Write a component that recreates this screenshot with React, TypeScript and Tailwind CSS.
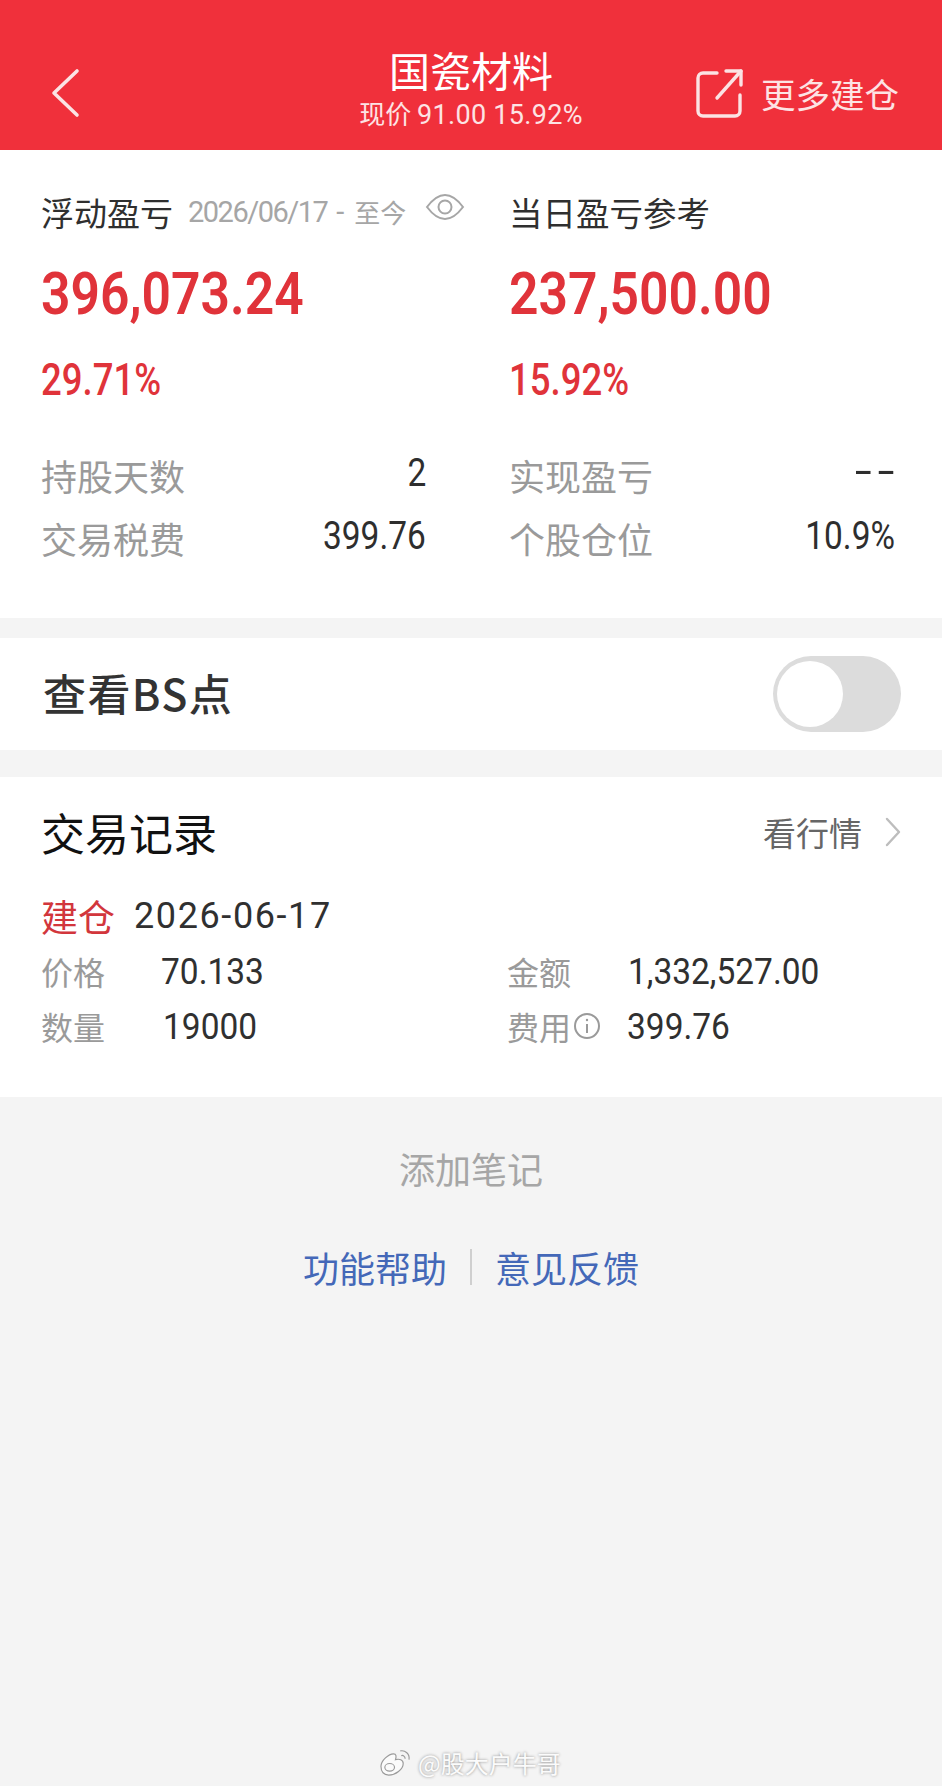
const cjk = "font-['Noto_Sans_CJK_SC','Noto_Sans',sans-serif]";
const num = "font-['Roboto','Noto_Sans_CJK_SC',sans-serif]";

const StatRow = ({ label, value }: { label: string; value: string }) => (
  <div className="flex justify-between h-[63px]">
    <span className="text-[36px] leading-[63px] text-[#9a9a9a]">{label}</span>
    {value === "--" ? (
      <span className={`${num} text-[62px] leading-[54px] font-light tracking-[5px] -mr-[5px] text-[#2e2e2e]`}>{value}</span>
    ) : (
      <span className={`${num} inline-block origin-right scale-x-[0.88] text-[38px] leading-[59px] text-[#2e2e2e]`}>{value}</span>
    )}
  </div>
);

const Field = ({ label, value, valueClass, info }: { label: string; value: string; valueClass: string; info?: boolean }) => (
  <div className="flex items-center h-[55px]">
    <span className="text-[32px] leading-none text-[#9a9a9a]">{label}</span>
    {info && (
      <svg viewBox="0 0 28 28" className="w-[28px] h-[28px] ml-[2px]" fill="none" stroke="#9a9a9a" strokeWidth="2">
        <circle cx="14" cy="14" r="12" />
        <path d="M14 12v9" />
        <circle cx="14" cy="8" r="1.2" fill="#9a9a9a" stroke="none" />
      </svg>
    )}
    <span className={`${num} ${valueClass} inline-block origin-left scale-x-[0.93] mt-[3px] text-[36px] leading-none text-[#303030]`}>{value}</span>
  </div>
);

export default function App() {
  return (
    <div className={`${cjk} w-full h-[1786px] bg-[#f4f4f4] relative overflow-hidden`}>
      {/* header */}
      <div className="h-[150px] bg-[#f0303b] text-white grid grid-cols-[1fr_auto_1fr] px-[51px]">
        <svg viewBox="0 0 30 50" className="w-[30px] h-[50px] mt-[68px]" fill="none" stroke="#fbe3e4" strokeWidth="3.6" strokeLinecap="round" strokeLinejoin="round">
          <path d="M26 3 3 25l23 22" />
        </svg>
        <div className="flex flex-col items-center mt-[45px]">
          <div className="text-[41px] leading-[48px]">国瓷材料</div>
          <div className="text-[26px] leading-[30px] mt-[5px] text-[#fde3e4] whitespace-nowrap">
            现价 <span className={`${num} text-[27px] tracking-[0.3px]`}>91.00 15.92%</span>
          </div>
        </div>
        <div className="flex items-center justify-end self-start mt-[68px] -mr-[8px] gap-[16px]">
          <svg viewBox="0 0 50 50" className="w-[50px] h-[50px] shrink-0" fill="none" stroke="#fbe3e4" strokeWidth="3.4" strokeLinecap="round" strokeLinejoin="round">
            <path d="M22 5H8a5 5 0 0 0-5 5v33a5 5 0 0 0 5 5h32a5 5 0 0 0 5-5V27" />
            <path d="M22 30 46 3" />
            <path d="M31 3h15v14" />
          </svg>
          <span className="text-[34.5px] leading-none text-[#fde3e4] whitespace-nowrap">更多建仓</span>
        </div>
      </div>

      {/* profit summary */}
      <div className="bg-white h-[468px] px-[41px] pt-[40px] flex">
        <div className="w-[385px] shrink-0">
          <div className="flex items-center h-[44px] whitespace-nowrap">
            <span className="text-[33px] leading-none text-[#2f2f2f]">浮动盈亏</span>
            <span className={`${num} text-[29px] leading-none tracking-[-1.5px] text-[#a6a6a6] ml-[15px]`}>2026/06/17</span>
            <span className={`${num} text-[29px] leading-none text-[#a6a6a6] ml-[9px]`}>-</span>
            <span className="text-[26px] leading-none text-[#a6a6a6] ml-[10px]">至今</span>
            <svg viewBox="0 0 40 28" className="w-[40px] h-[28px] shrink-0 ml-[19px] -mt-[10px]" fill="none" stroke="#a6a6a6" strokeWidth="2">
              <path d="M2 14C8 6 14 2 20 2s12 4 18 12c-6 8-12 12-18 12S8 22 2 14z" />
              <circle cx="20" cy="14" r="6.5" />
            </svg>
          </div>
          <div className={`${num} inline-block origin-left scale-x-[0.86] text-[60px] leading-[60px] font-semibold text-[#e0333a] mt-[30px]`}>396,073.24</div>
          <div className={`${num} origin-left scale-x-[0.83] text-[44px] leading-[50px] font-medium text-[#e0333a] mt-[31px]`}>29.71%</div>
          <div className="mt-[39px]">
            <StatRow label="持股天数" value="2" />
            <StatRow label="交易税费" value="399.76" />
          </div>
        </div>
        <div className="w-[386px] shrink-0 ml-[83px]">
          <div className="flex items-center h-[44px]">
            <span className="text-[33.5px] leading-none text-[#2f2f2f]">当日盈亏参考</span>
          </div>
          <div className={`${num} inline-block origin-left scale-x-[0.86] text-[60px] leading-[60px] font-semibold text-[#e0333a] mt-[30px]`}>237,500.00</div>
          <div className={`${num} origin-left scale-x-[0.83] text-[44px] leading-[50px] font-medium text-[#e0333a] mt-[31px]`}>15.92%</div>
          <div className="mt-[39px]">
            <StatRow label="实现盈亏" value="--" />
            <StatRow label="个股仓位" value="10.9%" />
          </div>
        </div>
      </div>

      {/* BS toggle */}
      <div className="bg-white mt-[20px] h-[112px] pl-[43px] pr-[41px] flex items-center justify-between">
        <span className="text-[43px] leading-none font-medium tracking-[1.4px] text-[#333333] -mt-[4px]">查看BS点</span>
        <div className="w-[128px] h-[76px] rounded-full bg-[#dcdcdc] flex items-center pl-[4px]">
          <div className="w-[66px] h-[66px] rounded-full bg-white" />
        </div>
      </div>

      {/* trade records */}
      <div className="bg-white mt-[27px] h-[320px] px-[41px] pt-[30px]">
        <div className="flex items-center justify-between h-[50px]">
          <span className="text-[44px] leading-none text-[#111111]">交易记录</span>
          <div className="flex items-center text-[#666666]">
            <span className="text-[33px] leading-none">看行情</span>
            <svg viewBox="0 0 18 30" className="w-[18px] h-[30px] ml-[22px] -mr-[1px]" fill="none" stroke="#bdbdbd" strokeWidth="2.4" strokeLinecap="round" strokeLinejoin="round">
              <path d="m3 2 12 13L3 28" />
            </svg>
          </div>
        </div>
        <div className="flex items-center mt-[34px] h-[50px]">
          <span className="text-[37px] leading-none text-[#d2363c]">建仓</span>
          <span className={`${num} text-[36px] leading-none tracking-[1.6px] text-[#303030] ml-[19px]`}>2026-06-17</span>
        </div>
        <div className="grid grid-cols-[466px_1fr] mt-[2px]">
          <Field label="价格" value="70.133" valueClass="ml-[56px]" />
          <Field label="金额" value="1,332,527.00" valueClass="ml-[57px]" />
          <Field label="数量" value="19000" valueClass="ml-[58px]" />
          <Field label="费用" value="399.76" valueClass="ml-[26px]" info />
        </div>
      </div>

      {/* footer links */}
      <div className="flex flex-col items-center pt-[49px]">
        <span className="text-[36px] leading-[44px] text-[#a6a6a6]">添加笔记</span>
        <div className="flex items-center mt-[59px] text-[36px] leading-none text-[#4468b8]">
          <span>功能帮助</span>
          <div className="w-[2px] h-[36px] bg-[#cfcfcf] mx-[23px]" />
          <span>意见反馈</span>
        </div>
      </div>

      {/* watermark */}
      <div className="absolute left-[377px] top-[1748px] flex items-center gap-[6px] text-[#fbfbfb] text-[24px] leading-none [text-shadow:0_0_3px_#8a8a8a]">
        <svg viewBox="0 0 36 30" className="w-[35px] h-[29px]" fill="#fbfbfb" stroke="#9a9a9a" strokeWidth="1.2">
          <path d="M4 19c0-6 8-13 13-13 3 0 3 3 2 6 4-1 8 0 8 4 0 6-8 12-15 12-5 0-8-3-8-9z" />
          <ellipse cx="13" cy="20" rx="5" ry="4" fill="none" />
          <path d="M24 3c5-1 10 3 9 9M25 8c2-1 4 1 4 3" fill="none" />
        </svg>
        <span>@股大户牛哥</span>
      </div>
    </div>
  );
}
